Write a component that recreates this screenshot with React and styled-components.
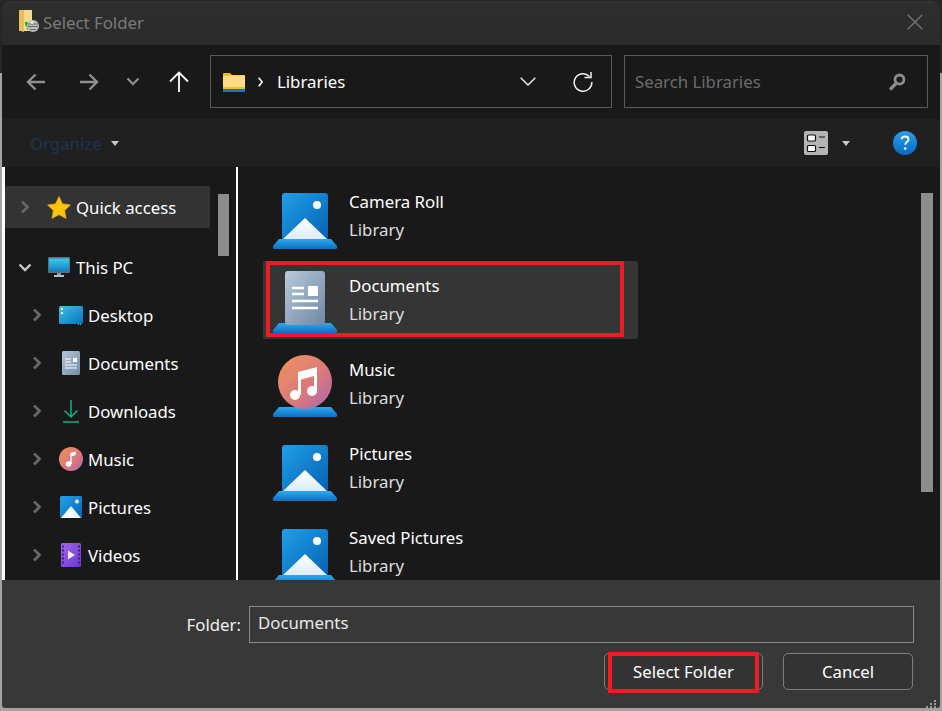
import React from "react";
import styled, { createGlobalStyle } from "styled-components";

const Global = createGlobalStyle`
  html, body { margin: 0; padding: 0; height: 711px; overflow: hidden; }
  body { background: linear-gradient(#262626 0 73px, #a3a3a3 73px); font-family: "Noto Sans", "Open Sans", sans-serif; }
  * { box-sizing: border-box; }
`;

const Dialog = styled.div`
  margin: 1px 2px 0;
  width: 938px;
  height: 707px;
  display: flex;
  flex-direction: column;
  border-radius: 9px 9px 3px 3px;
  overflow: hidden;
  color: #fff;
  font-size: 16.8px;
  position: relative;
`;
const TitleBar = styled.div`
  height: 44px;
  flex: none;
  display: flex;
  align-items: center;
  padding: 0 17px 2px 15px;
  background: linear-gradient(#343434 0, #2d2d2d 4px, #2b2b2b 100%);
  color: #7a7a7a;
`;
const TitleText = styled.span`
  margin-left: 4px;
  flex: 1;
`;
const NavBar = styled.div`
  height: 74px;
  flex: none;
  display: flex;
  align-items: center;
  padding: 0 0 1px 7px;
  background: #191919;
`;
const NavSlot = styled.div`
  width: ${(p) => p.$w}px;
  display: flex;
  justify-content: center;
  align-items: center;
`;
const FieldBox = styled.div`
  height: 53px;
  width: ${(p) => p.$w}px;
  margin-left: ${(p) => p.$ml}px;
  border: 1px solid #5b5b5b;
  display: flex;
  align-items: center;
`;
const AddressBox = styled(FieldBox)`
  padding: 0 18px 0 12px;
`;
const SearchBox = styled(FieldBox)`
  padding: 0 21px 0 10px;
  justify-content: space-between;
  color: #6b6b6b;
`;
const Crumb = styled.span`
  margin-left: 14px;
  flex: 1;
`;
const CrumbSep = styled.span`
  margin-left: 13px;
  display: flex;
`;
const RefreshIcon = styled.svg`
  margin-left: 37px;
`;
const ToolBar = styled.div`
  height: 48px;
  flex: none;
  display: flex;
  align-items: center;
  padding: 0 23px 0 28px;
  background: #202020;
`;
const Organize = styled.span`
  color: #1d3352;
  margin-right: 9px;
`;
const ToolSpacer = styled.div`
  flex: 1;
`;
const ViewCaret = styled.svg`
  margin: 0 43px 0 14px;
`;
const Main = styled.div`
  height: 413px;
  flex: none;
  display: flex;
  background: #191919;
  border-left: 3px solid #fff;
`;
const Sidebar = styled.div`
  width: 231px;
  flex: none;
  display: flex;
`;
const Tree = styled.div`
  width: 213px;
  padding-top: 19px;
  overflow: hidden;
`;
const TreeRow = styled.div`
  width: 205px;
  height: ${(p) => (p.$selected ? 42 : 48)}px;
  margin-bottom: ${(p) => (p.$selected ? 15 : 0)}px;
  display: flex;
  align-items: center;
  padding-left: ${(p) => (p.$depth ? 22 : 10)}px;
  background: ${(p) => (p.$selected ? "#333333" : "transparent")};
  border-radius: 2px;
  color: #fff;
`;
const ChevronSlot = styled.div`
  width: 20px;
  margin-right: 12px;
  display: flex;
  justify-content: center;
  flex: none;
`;
const TreeIcon = styled.div`
  width: 24px;
  height: 24px;
  margin-right: 5px;
  flex: none;
  display: flex;
  align-items: center;
  justify-content: center;
`;
const Thumb = styled.div`
  width: ${(p) => p.$w}px;
  height: ${(p) => p.$h}px;
  margin-top: ${(p) => p.$top}px;
  flex: none;
  background: #8c8c8c;
`;
const Divider = styled.div`
  width: 2px;
  flex: none;
  background: #fff;
`;
const ListArea = styled.div`
  flex: 1;
  display: flex;
  padding-right: 7px;
  overflow: hidden;
`;
const List = styled.div`
  flex: 1;
  padding: 10px 0 0 25px;
  display: flex;
  flex-direction: column;
  gap: 6px;
  overflow: hidden;
`;
const LibRow = styled.div`
  position: relative;
  width: 375px;
  height: 78px;
  flex: none;
  display: flex;
  align-items: center;
  padding: 2px 0 0 10px;
  background: ${(p) => (p.$selected ? "#353535" : "transparent")};
  border-radius: 2px;
`;
const LibText = styled.div`
  margin: -2px 0 0 12px;
  display: flex;
  flex-direction: column;
  line-height: 28px;
`;
const LibSub = styled.span`
  color: #dedede;
`;
const RedMark = styled.div`
  position: absolute;
  border: 4px solid #ed1c24;
  pointer-events: none;
`;
const RowMark = styled(RedMark)`
  left: 3px;
  top: 0;
  width: 358px;
  height: 76px;
`;
const ButtonMark = styled(RedMark)`
  left: 3px;
  top: -2px;
  width: 151px;
  height: 41px;
`;
const Footer = styled.div`
  height: 128px;
  flex: none;
  background: #383838;
  padding: 26px 26px 0 0;
  position: relative;
`;
const FolderRow = styled.div`
  display: flex;
  align-items: center;
  justify-content: flex-end;
  gap: 8px;
`;
const FolderLabel = styled.span`
  color: #f0f0f0;
`;
const FolderInput = styled.div`
  width: 665px;
  height: 37px;
  border: 1px solid #8a8a8a;
  padding: 0 8px 4px;
  display: flex;
  align-items: center;
  color: #e8e8e8;
`;
const ButtonRow = styled.div`
  display: flex;
  justify-content: flex-end;
  gap: 20px;
  margin-top: 10px;
  padding-right: 1px;
`;
const Button = styled.div`
  position: relative;
  width: ${(p) => p.$w}px;
  height: 37px;
  border: 1px solid #7e7e7e;
  border-radius: 5px;
  display: flex;
  align-items: center;
  justify-content: center;
  background: #333333;
  color: #fff;
`;
const Grip = styled.svg`
  position: absolute;
  right: 2px;
  bottom: 0;
`;

const Chevron = ({ open }) =>
  open ? (
    <svg width="14" height="9" viewBox="0 0 14 9"><path d="M1.5 1.5 7 7l5.5-5.5" fill="none" stroke="#c8c8c8" strokeWidth="2.4" /></svg>
  ) : (
    <svg width="10" height="14" viewBox="0 0 10 14"><path d="M2 1.5 7.5 7 2 12.5" fill="none" stroke="#666" strokeWidth="2.8" /></svg>
  );

const TitleIcon = () => (
  <svg width="22" height="24" viewBox="0 0 22 24">
    <path d="M2 0h13v21H2z" fill="#f6da8c" />
    <path d="M2 0h5v22l-5-1.500z" fill="#e8bd5a" />
    <path d="M8 12a6 6 0 0 0 3 6l-2 1 5 2v-5l-1.500 1a4 4 0 0 1-1.500-5z" fill="#20a83a" />
    <circle cx="16" cy="16" r="6" fill="#bcbcbc" />
    <path d="M11 14h10M11 16.500h10M13 19.500h6" stroke="#6a6a6a" strokeWidth="1" />
    <circle cx="15" cy="12.500" r="1.500" fill="#e8e8e8" />
  </svg>
);
const Cross = () => (
  <svg width="16" height="16" viewBox="0 0 16 16"><path d="M.7.7l14.6 14.6M15.3.7.7 15.3" stroke="#777" strokeWidth="1.3" /></svg>
);
const BackArrow = () => (
  <svg width="20" height="18" viewBox="0 0 20 18"><path d="M19 9H2M9.500 1.500 2 9l7.500 7.500" fill="none" stroke="#909090" strokeWidth="2.400" /></svg>
);
const ForwardArrow = () => (
  <svg width="20" height="18" viewBox="0 0 20 18"><path d="M1 9h17M10.500 1.500 18 9l-7.500 7.500" fill="none" stroke="#909090" strokeWidth="2.400" /></svg>
);
const UpArrow = () => (
  <svg width="20" height="22" viewBox="0 0 20 22"><path d="M10 21V2M1 10.500 10 1.500l9 9" fill="none" stroke="#f4f4f4" strokeWidth="1.900" /></svg>
);
const SmallDown = () => (
  <svg width="14" height="9" viewBox="0 0 14 9"><path d="M1.500 1.500 7 7l5.500-5.500" fill="none" stroke="#8a8a8a" strokeWidth="2.400" /></svg>
);
const FolderIcon = () => (
  <svg width="22" height="20" viewBox="0 0 22 20">
    <path d="M0 2a1 1 0 0 1 1-1h6l2 2h12a1 1 0 0 1 1 1v4H0z" fill="#f5b21c" />
    <rect y="3.500" width="22" height="14" rx="1" fill="#ffdd82" />
    <rect y="17" width="22" height="3" fill="#0f78c4" />
    <rect y="15" width="22" height="2" fill="#f2b93a" />
  </svg>
);
const CrumbChevron = () => (
  <svg width="5" height="10" viewBox="0 0 5 10"><path d="M.7.800 4.200 5 .7 9.200" fill="none" stroke="#f4f4f4" strokeWidth="1.700" /></svg>
);
const AddressDown = () => (
  <svg width="16" height="9" viewBox="0 0 16 9"><path d="M.7.700 8 8l7.300-7.300" fill="none" stroke="#f0f0f0" strokeWidth="1.400" /></svg>
);
const SearchIcon = () => (
  <svg width="18" height="18" viewBox="0 0 18 18">
    <circle cx="11.500" cy="6.500" r="4.500" fill="none" stroke="#8c8c8c" strokeWidth="2.800" />
    <path d="M8 10.500 2 16.500" stroke="#8c8c8c" strokeWidth="3.200" />
  </svg>
);
const Caret = () => (
  <svg width="8" height="5" viewBox="0 0 8 5"><path d="M0 0h8L4 5z" fill="#c8c8c8" /></svg>
);
const ViewIcon = () => (
  <svg width="24" height="24" viewBox="0 0 24 24">
    <rect width="24" height="24" rx="2" fill="#b4b4b4" />
    <rect x="3.500" y="4" width="8" height="6" rx="1" fill="#fff" stroke="#111" strokeWidth="1.200" />
    <rect x="3.500" y="14.500" width="8" height="6" rx="1" fill="#fff" stroke="#111" strokeWidth="1.200" />
    <path d="M15 6h6M15 16.500h6" stroke="#111" strokeWidth="1.200" />
  </svg>
);
const HelpIcon = () => (
  <svg width="24" height="24" viewBox="0 0 24 24">
    <defs>
      <linearGradient id="helpG" x1="0" y1="0" x2="0" y2="1"><stop offset="0" stopColor="#2aa0e8" /><stop offset="1" stopColor="#0668c8" /></linearGradient>
    </defs>
    <circle cx="12" cy="12" r="12" fill="url(#helpG)" />
    <path d="M8.500 8.200c.5-2 2-2.700 3.600-2.700 2 0 3.400 1.200 3.400 2.900 0 2.700-3.300 2.700-3.300 5.400" fill="none" stroke="#fff" strokeWidth="1.900" />
    <circle cx="12.200" cy="17.500" r="1.300" fill="#fff" />
  </svg>
);

const StarIcon = () => (
  <svg width="24" height="23" viewBox="0 0 24 23"><path d="M12 .5l3.500 7.300 8 1.100-5.800 5.600 1.400 8L12 18.700 4.900 22.500l1.400-8L.5 8.900l8-1.100z" fill="#ffc20e" stroke="#f7a600" strokeWidth=".6" /></svg>
);
const MonitorIcon = () => (
  <svg width="22" height="20" viewBox="0 0 22 20">
    <defs><linearGradient id="monG" x1="0" y1="0" x2="0" y2="1"><stop offset="0" stopColor="#3ccbe8" /><stop offset="1" stopColor="#0f7fc4" /></linearGradient></defs>
    <rect width="22" height="16" rx="1" fill="#5d6f7c" />
    <rect x="1" y="1.500" width="20" height="13" fill="url(#monG)" />
    <rect x="9" y="16" width="4" height="2" fill="#8899a6" />
    <rect x="6" y="18" width="10" height="2" fill="#b5c1cb" />
  </svg>
);
const DesktopIcon = () => (
  <svg width="24" height="19" viewBox="0 0 24 19">
    <defs><linearGradient id="deskG" x1="0" y1="0" x2="1" y2="1"><stop offset="0" stopColor="#38c6e6" /><stop offset="1" stopColor="#0b6fbd" /></linearGradient></defs>
    <rect width="24" height="18" rx="1.500" fill="url(#deskG)" />
    <rect x="2" y="2" width="2" height="2" fill="#fff" />
    <rect x="2" y="6" width="2" height="2" fill="#fff" />
    <rect x="19" y="18" width="1" height="1" fill="#9ab" />
    <rect x="21" y="18" width="1" height="1" fill="#9ab" />
  </svg>
);
const DocSmall = () => (
  <svg width="18" height="24" viewBox="0 0 18 24">
    <defs><linearGradient id="docS" x1="0" y1="0" x2="1" y2="1"><stop offset="0" stopColor="#b7c6d6" /><stop offset="1" stopColor="#6f8ba8" /></linearGradient></defs>
    <rect width="18" height="24" rx="1.500" fill="url(#docS)" />
    <rect x="11" y="7" width="4" height="4" fill="#fff" />
    <path d="M3 8h6M3 11h6M3 14h12M3 17h12" stroke="#fff" strokeWidth="1" />
  </svg>
);
const DownloadIcon = () => (
  <svg width="16" height="23" viewBox="0 0 16 23"><path d="M8 0v17M1.500 10.500 8 17l6.500-6.500M0 22h16" fill="none" stroke="#17ab8c" strokeWidth="1.500" /></svg>
);
const MusicSmall = () => (
  <svg width="24" height="24" viewBox="0 0 24 24">
    <defs><linearGradient id="musS" x1="0" y1="0" x2="1" y2="1"><stop offset="0" stopColor="#f0935c" /><stop offset=".6" stopColor="#d9777c" /><stop offset="1" stopColor="#a968b8" /></linearGradient></defs>
    <circle cx="12" cy="12" r="12" fill="url(#musS)" />
    <circle cx="9.500" cy="17" r="2.800" fill="#fff" />
    <path d="M11.300 17V6l5.500-1.500v3.500l-4 1.200V17z" fill="#fff" />
  </svg>
);
const PictureSmall = () => (
  <svg width="22" height="22" viewBox="0 0 22 22">
    <defs><linearGradient id="picS" x1="0" y1="0" x2="1" y2="1"><stop offset="0" stopColor="#23a1e8" /><stop offset="1" stopColor="#0566bd" /></linearGradient></defs>
    <rect width="22" height="22" rx="1.500" fill="url(#picS)" />
    <circle cx="17" cy="5.500" r="1.900" fill="#fff" />
    <path d="M11 10l10 12H1z" fill="#f2f8fd" />
  </svg>
);
const VideoIcon = () => (
  <svg width="20" height="24" viewBox="0 0 20 24">
    <defs><linearGradient id="vidS" x1="0" y1="0" x2="1" y2="1"><stop offset="0" stopColor="#a565f0" /><stop offset="1" stopColor="#6a37d0" /></linearGradient></defs>
    <rect width="20" height="24" rx="1.500" fill="url(#vidS)" />
    <path d="M2 2.500v19M18 2.500v19" stroke="#3e1f90" strokeWidth="2" strokeDasharray="2 2" />
    <path d="M7 7.500l7 4.500-7 4.500z" fill="#f1e8ff" />
  </svg>
);

const LibBase = ({ id }) => (
  <>
    <defs>
      <linearGradient id={id} x1="0" y1="0" x2="0" y2="1"><stop offset="0" stopColor="#2ea8ee" /><stop offset="1" stopColor="#0f6fc0" /></linearGradient>
    </defs>
    <path d="M6 46h52l6 7v1.500a1.500 1.500 0 0 1-1.500 1.500H1.500A1.500 1.500 0 0 1 0 54.500V53z" fill={`url(#${id})`} />
  </>
);
const LibPicture = ({ id }) => (
  <svg width="64" height="64" viewBox="0 -8 64 64">
    <defs>
      <linearGradient id={`${id}t`} x1="0" y1="0" x2="1" y2="1"><stop offset="0" stopColor="#20a0e6" /><stop offset="1" stopColor="#0461b5" /></linearGradient>
      <linearGradient id={`${id}m`} x1="0" y1="0" x2="0" y2="1"><stop offset="0" stopColor="#ffffff" /><stop offset="1" stopColor="#dcecf9" /></linearGradient>
    </defs>
    <rect x="9" width="46" height="47" rx="3" fill={`url(#${id}t)`} />
    <circle cx="44" cy="12" r="4" fill="#fff" />
    <path d="M32 25l22 21H10z" fill={`url(#${id}m)`} />
    <LibBase id={`${id}b`} />
  </svg>
);
const LibDoc = () => (
  <svg width="64" height="64" viewBox="0 -8 64 64">
    <defs><linearGradient id="docL" x1="0" y1="0" x2="1" y2="1"><stop offset="0" stopColor="#b9c9d9" /><stop offset="1" stopColor="#6d88a4" /></linearGradient></defs>
    <LibBase id="docB" />
    <rect x="12" y="-6" width="40" height="54" rx="3" fill="url(#docL)" />
    <rect x="35" y="9" width="10" height="10" rx="1" fill="#fff" />
    <path d="M19 11h12M19 17h12M19 24h26M19 31h26" stroke="#fff" strokeWidth="2.600" />
  </svg>
);
const LibMusic = () => (
  <svg width="64" height="64" viewBox="0 -8 64 64">
    <defs><linearGradient id="musL" x1="0" y1="0" x2="1" y2="1"><stop offset="0" stopColor="#f0945c" /><stop offset=".6" stopColor="#d9777c" /><stop offset="1" stopColor="#a868b8" /></linearGradient></defs>
    <LibBase id="musB" />
    <circle cx="32" cy="21" r="27" fill="url(#musL)" />
    <circle cx="22" cy="34" r="5" fill="#fff" />
    <circle cx="39" cy="30" r="5" fill="#fff" />
    <path d="M25 34V11l19-5v24h-3V15l-13 3.500V34z" fill="#fff" />
  </svg>
);

const treeItems = [
  { label: "Desktop", icon: <DesktopIcon /> },
  { label: "Documents", icon: <DocSmall /> },
  { label: "Downloads", icon: <DownloadIcon /> },
  { label: "Music", icon: <MusicSmall /> },
  { label: "Pictures", icon: <PictureSmall /> },
  { label: "Videos", icon: <VideoIcon /> },
];

const libraries = [
  { name: "Camera Roll", icon: <LibPicture id="lc" /> },
  { name: "Documents", icon: <LibDoc />, selected: true },
  { name: "Music", icon: <LibMusic /> },
  { name: "Pictures", icon: <LibPicture id="lp" /> },
  { name: "Saved Pictures", icon: <LibPicture id="ls" /> },
];

export default function App() {
  return (
    <>
      <Global />
      <Dialog>
        <TitleBar>
          <TitleIcon />
          <TitleText>Select Folder</TitleText>
          <Cross />
        </TitleBar>
        <NavBar>
          <NavSlot $w={53}><BackArrow /></NavSlot>
          <NavSlot $w={53}><ForwardArrow /></NavSlot>
          <NavSlot $w={35}><SmallDown /></NavSlot>
          <NavSlot $w={58}><UpArrow /></NavSlot>
          <AddressBox $w={402} $ml={2}>
            <FolderIcon />
            <CrumbSep><CrumbChevron /></CrumbSep>
            <Crumb>Libraries</Crumb>
            <AddressDown />
            <RefreshIcon width="20" height="20" viewBox="0 0 20 20">
              <path d="M16.500 4.500A8.800 8.800 0 1 0 18.800 10" fill="none" stroke="#f0f0f0" strokeWidth="1.500" />
              <path d="M11.500 5.500h6.500V0" fill="none" stroke="#f0f0f0" strokeWidth="1.500" />
            </RefreshIcon>
          </AddressBox>
          <SearchBox $w={304} $ml={12}>
            <span>Search Libraries</span>
            <SearchIcon />
          </SearchBox>
        </NavBar>
        <ToolBar>
          <Organize>Organize</Organize>
          <Caret />
          <ToolSpacer />
          <ViewIcon />
          <ViewCaret width="8" height="5" viewBox="0 0 8 5"><path d="M0 0h8L4 5z" fill="#c8c8c8" /></ViewCaret>
          <HelpIcon />
        </ToolBar>
        <Main>
          <Sidebar>
            <Tree>
              <TreeRow $selected>
                <ChevronSlot><Chevron /></ChevronSlot>
                <TreeIcon><StarIcon /></TreeIcon>
                <span>Quick access</span>
              </TreeRow>
              <TreeRow>
                <ChevronSlot><Chevron open /></ChevronSlot>
                <TreeIcon><MonitorIcon /></TreeIcon>
                <span>This PC</span>
              </TreeRow>
              {treeItems.map((item) => (
                <TreeRow $depth={1} key={item.label}>
                  <ChevronSlot><Chevron /></ChevronSlot>
                  <TreeIcon>{item.icon}</TreeIcon>
                  <span>{item.label}</span>
                </TreeRow>
              ))}
            </Tree>
            <Thumb $w={11} $h={62} $top={27} />
          </Sidebar>
          <Divider />
          <ListArea>
            <List>
              {libraries.map((lib) => (
                <LibRow key={lib.name} $selected={lib.selected}>
                  {lib.icon}
                  <LibText>
                    <span>{lib.name}</span>
                    <LibSub>Library</LibSub>
                  </LibText>
                  {lib.selected && <RowMark />}
                </LibRow>
              ))}
            </List>
            <Thumb $w={12} $h={299} $top={26} />
          </ListArea>
        </Main>
        <Footer>
          <FolderRow>
            <FolderLabel>Folder:</FolderLabel>
            <FolderInput>Documents</FolderInput>
          </FolderRow>
          <ButtonRow>
            <Button $w={159}>
              Select Folder
              <ButtonMark />
            </Button>
            <Button $w={130}>Cancel</Button>
          </ButtonRow>
          <Grip width="12" height="8" viewBox="0 0 12 8">
            <path d="M8 0h2v2H8zM4 3h2v2H4zM8 3h2v2H8zM0 6h2v2H0zM4 6h2v2H4zM8 6h2v2H8z" fill="#9a9a9a" />
          </Grip>
        </Footer>
      </Dialog>
    </>
  );
}
